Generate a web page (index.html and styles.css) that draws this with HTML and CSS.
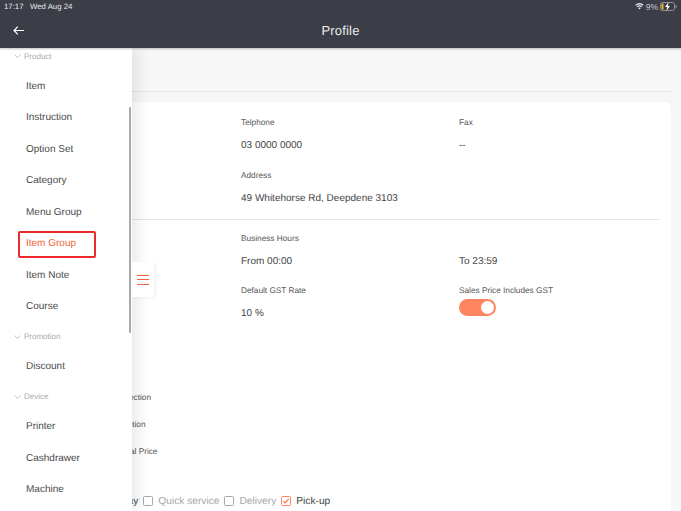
FILE: index.html
```html
<!DOCTYPE html>
<html lang="en">
<head>
<meta charset="utf-8">
<title>Profile</title>
<link rel="stylesheet" href="styles.css">
</head>
<body>
<div class="app">
  <header class="header">
    <div class="status">
      <span class="status-time">17:17&nbsp;&nbsp; Wed Aug 24</span>
      <span class="status-right">
        <svg class="wifi" width="9" height="7" viewBox="0 0 13 9"><path d="M6.5 9 4.6 6.7a3 3 0 0 1 3.8 0ZM3.7 5.7 2.6 4.4a6.2 6.2 0 0 1 7.8 0L9.3 5.7a4.4 4.4 0 0 0-5.6 0ZM1.7 3.5.5 2.1a9.3 9.3 0 0 1 12 0l-1.2 1.4a7.5 7.5 0 0 0-9.6 0Z" fill="#e8e8ea"/></svg>
        <span>9%</span>
        <svg class="battery" width="17" height="9" viewBox="0 0 17 9"><rect x=".5" y=".5" width="14" height="8" rx="2" fill="none" stroke="#8d8f95"/><rect x="1.5" y="1.5" width="2" height="6" fill="#e3b92d"/><path d="M15.5 3v3a1.5 1.5 0 0 0 0-3Z" fill="#8d8f95"/><path d="M8.6 0 5 5h2.2L6.4 9 10 4H7.8Z" fill="#fff"/></svg>
      </span>
    </div>
    <div class="navbar">
      <svg class="back" width="11" height="9" viewBox="0 0 11 9"><path d="M11 4.5H1M4.8.6 1 4.5l3.8 3.9" fill="none" stroke="#fff" stroke-width="1.2"/></svg>
      <h1 class="title">Profile</h1>
    </div>
  </header>

  <main class="content">
    <div class="page-head"></div>
    <section class="card">
      <div class="grid first">
        <div class="field"></div>
        <div class="field"><div class="label">Telphone</div><div class="value">03 0000 0000</div></div>
        <div class="field"><div class="label">Fax</div><div class="value">--</div></div>
        <div class="field"></div>
        <div class="field wide"><div class="label">Address</div><div class="value">49 Whitehorse Rd, Deepdene 3103</div></div>
      </div>
      <hr class="rule">
      <div class="grid">
        <div class="field"></div>
        <div class="field"><div class="label">Business Hours</div><div class="value">From 00:00</div></div>
        <div class="field"><div class="label">&nbsp;</div><div class="value">To 23:59</div></div>
        <div class="field"></div>
        <div class="field"><div class="label">Default GST Rate</div><div class="value">10 %</div></div>
        <div class="field">
          <div class="label">Sales Price Includes GST</div>
          <div class="toggle"><span class="knob"></span></div>
        </div>
      </div>
      <div class="options">
        <div class="option">Auto Print Section</div>
        <div class="option">Use Print Option</div>
        <div class="option">Show Original Price</div>
      </div>
      <div class="checks">
        <span class="check-text on">Takeaway</span>
        <span class="box"></span><span class="check-text">Quick service</span>
        <span class="box"></span><span class="check-text">Delivery</span>
        <span class="box checked"><svg width="9" height="8" viewBox="0 0 9 8"><path d="M1.5 4 3.6 6.2 7.6 1.5" fill="none" stroke="#f4643a" stroke-width="1.2"/></svg></span><span class="check-text on">Pick-up</span>
      </div>
    </section>
  </main>

  <nav class="drawer">
    <ul class="menu">
      <li class="group"><svg class="chev" width="7" height="4" viewBox="0 0 7 4"><path d="M.5.5 3.5 3.5 6.5.5" fill="none" stroke="#aaa" stroke-width=".7"/></svg>Product</li>
      <li class="item">Item</li>
      <li class="item">Instruction</li>
      <li class="item">Option Set</li>
      <li class="item">Category</li>
      <li class="item">Menu Group</li>
      <li class="item active"><span>Item Group</span></li>
      <li class="item">Item Note</li>
      <li class="item">Course</li>
      <li class="group"><svg class="chev" width="7" height="4" viewBox="0 0 7 4"><path d="M.5.5 3.5 3.5 6.5.5" fill="none" stroke="#aaa" stroke-width=".7"/></svg>Promotion</li>
      <li class="item">Discount</li>
      <li class="group"><svg class="chev" width="7" height="4" viewBox="0 0 7 4"><path d="M.5.5 3.5 3.5 6.5.5" fill="none" stroke="#aaa" stroke-width=".7"/></svg>Device</li>
      <li class="item">Printer</li>
      <li class="item">Cashdrawer</li>
      <li class="item">Machine</li>
    </ul>
    <div class="scrollbar"></div>
  </nav>
  <div class="drawer-tab"><span></span><span></span><span></span></div>
</div>
</body>
</html>
```

FILE: styles.css
```css
* { box-sizing: border-box; }
html, body { margin: 0; height: 100%; }
body { font-family: "Liberation Sans", Arial, sans-serif; background: #f7f7f7; overflow: hidden; color: #444; text-rendering: geometricPrecision; }
.app { position: relative; width: 681px; height: 511px; overflow: hidden; }

.header { height: 48px; background: #3b3e47; color: #fff; position: relative; z-index: 3; box-shadow: 0 1px 2px rgba(0,0,0,.25); }
.status { height: 13px; padding: 0 4px; display: flex; justify-content: space-between; align-items: center; font-size: 7.8px; color: #e8e8ea; }
.status-right { display: flex; align-items: center; gap: 2px; font-size: 8.5px; color: #c9cacd; }
.navbar { height: 35px; position: relative; display: flex; align-items: center; justify-content: center; }
.back { position: absolute; left: 12.5px; top: 13px; }
.title { margin: 0 0 1px; font-size: 13px; font-weight: 400; letter-spacing: .2px; color: #eceded; }

.content { padding: 0 10px; height: 463px; }
.page-head { height: 44px; border-bottom: 1px solid #e4e4e4; }
.card { margin-top: 10px; background: #fff; border-radius: 6px; padding: 11px 12px 0 24px; height: 420px; box-shadow: 0 0 3px rgba(0,0,0,.03); }
.grid { display: grid; grid-template-columns: 207px 218px 1fr; }
.grid.first { padding-bottom: 1px; }
.field { height: 52.5px; }
.wide { grid-column: 2 / 4; }
.label { font-size: 8.25px; line-height: 20px; color: #555; }
.value { font-size: 10px; line-height: 14px; margin-top: 6px; color: #444; }
.rule { border: 0; border-top: 1px solid #e6e6e6; margin: 0; }
.rule + .grid { padding-top: 8.5px; }
.toggle { width: 37px; height: 17px; border-radius: 9px; background: #ff8560; margin-top: -2px; position: relative; }
.knob { position: absolute; right: 2px; top: 2px; width: 13px; height: 13px; border-radius: 50%; background: #fff; }
.options { margin-top: 50.5px; }
.option { font-size: 8.25px; line-height: 27px; color: #555; padding-left: 51px; }
.checks { display: flex; align-items: center; margin-top: 29px; font-size: 10.2px; padding-left: 59px; height: 14px; }
.check-text { color: #a8a8a8; margin-right: 5px; }
.check-text.on { color: #444; }
.box { width: 10px; height: 10px; border: 1px solid #a8a8a8; border-radius: 1.5px; margin-right: 5px; display: flex; align-items: center; justify-content: center; }
.box.checked { border-color: #ff8560; }

.drawer { position: absolute; left: 0; top: 48px; width: 132px; height: 463px; background: #fff; overflow: hidden; z-index: 2; box-shadow: 6px 0 14px rgba(0,0,0,.09); }
.menu { list-style: none; margin: -6px 0 0; padding: 0; }
.group { height: 28.5px; display: flex; align-items: center; padding-left: 14px; gap: 3px; font-size: 8px; color: #aaa; }
.item { height: 31.5px; display: flex; align-items: center; padding-left: 26px; font-size: 10px; color: #4a4a4a; }
.active { padding-left: 18px; color: #f4643a; }
.active span { width: 78px; height: 27px; margin-top: 2px; border: 2px solid #ec2a2a; border-radius: 2px; padding-left: 6px; line-height: 21px; }
.scrollbar { position: absolute; left: 129px; top: 59px; width: 2px; height: 226px; background: #a9a9a9; border-radius: 1px; }
.drawer-tab { position: absolute; left: 132px; top: 262px; width: 22px; height: 35px; background: #fff; border-radius: 0 3px 3px 0; box-shadow: 2px 1px 3px rgba(0,0,0,.06); display: flex; flex-direction: column; justify-content: center; gap: 3.5px; padding-left: 5px; z-index: 2; }
.drawer-tab span { width: 12px; height: 1px; background: #f4643a; }
```
